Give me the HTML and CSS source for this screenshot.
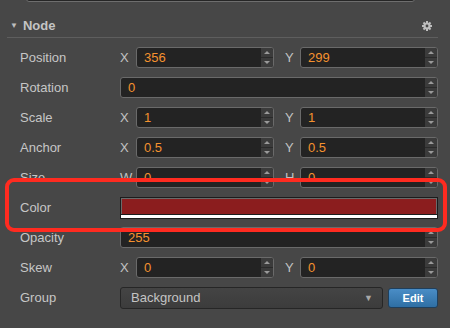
FILE: index.html
```html
<!DOCTYPE html>
<html>
<head>
<meta charset="utf-8">
<link rel="stylesheet" href="styles.css">
</head>
<body>
<div class="panel">
  <div class="stub"></div>
  <div class="header">
    <span class="caret">▼</span>
    <span class="title">Node</span>
    <svg class="gear" width="10" height="10" viewBox="0 0 10 10">
      <g fill="#bdbdbd">
        <rect x="4" y="0" width="2" height="10"/>
        <rect x="0" y="4" width="10" height="2"/>
        <rect x="4" y="0" width="2" height="10" transform="rotate(45 5 5)"/>
        <rect x="4" y="0" width="2" height="10" transform="rotate(-45 5 5)"/>
        <circle cx="5" cy="5" r="3.6"/>
      </g>
      <circle cx="5" cy="5" r="1.4" fill="#474747"/>
    </svg>
  </div>
  <div class="rows">
    <div class="row">
      <div class="label">Position</div>
      <div class="fields">
        <span class="axis">X</span>
        <div class="num"><span class="val">356</span><span class="spin"><i class="up"></i><i class="down"></i></span></div>
        <span class="axis axis-y">Y</span>
        <div class="num"><span class="val">299</span><span class="spin"><i class="up"></i><i class="down"></i></span></div>
      </div>
    </div>
    <div class="row">
      <div class="label">Rotation</div>
      <div class="fields">
        <div class="num"><span class="val">0</span><span class="spin"><i class="up"></i><i class="down"></i></span></div>
      </div>
    </div>
    <div class="row">
      <div class="label">Scale</div>
      <div class="fields">
        <span class="axis">X</span>
        <div class="num"><span class="val">1</span><span class="spin"><i class="up"></i><i class="down"></i></span></div>
        <span class="axis axis-y">Y</span>
        <div class="num"><span class="val">1</span><span class="spin"><i class="up"></i><i class="down"></i></span></div>
      </div>
    </div>
    <div class="row">
      <div class="label">Anchor</div>
      <div class="fields">
        <span class="axis">X</span>
        <div class="num"><span class="val">0.5</span><span class="spin"><i class="up"></i><i class="down"></i></span></div>
        <span class="axis axis-y">Y</span>
        <div class="num"><span class="val">0.5</span><span class="spin"><i class="up"></i><i class="down"></i></span></div>
      </div>
    </div>
    <div class="row">
      <div class="label">Size</div>
      <div class="fields">
        <span class="axis">W</span>
        <div class="num"><span class="val">0</span><span class="spin"><i class="up"></i><i class="down"></i></span></div>
        <span class="axis axis-y">H</span>
        <div class="num"><span class="val">0</span><span class="spin"><i class="up"></i><i class="down"></i></span></div>
      </div>
    </div>
    <div class="row">
      <div class="label">Color</div>
      <div class="fields">
        <div class="color"><div class="swatch"></div><div class="alpha"></div></div>
      </div>
    </div>
    <div class="row">
      <div class="label">Opacity</div>
      <div class="fields">
        <div class="num"><span class="val">255</span><span class="spin"><i class="up"></i><i class="down"></i></span></div>
      </div>
    </div>
    <div class="row">
      <div class="label">Skew</div>
      <div class="fields">
        <span class="axis">X</span>
        <div class="num"><span class="val">0</span><span class="spin"><i class="up"></i><i class="down"></i></span></div>
        <span class="axis axis-y">Y</span>
        <div class="num"><span class="val">0</span><span class="spin"><i class="up"></i><i class="down"></i></span></div>
      </div>
    </div>
    <div class="row">
      <div class="label">Group</div>
      <div class="fields">
        <div class="select"><span>Background</span><span class="arrow">▼</span></div>
        <div class="btn">Edit</div>
      </div>
    </div>
  </div>
  <div class="highlight"></div>
</div>
</body>
</html>
```
FILE: styles.css
```css
html, body {
  margin: 0;
  padding: 0;
  background: #474747;
  font-family: "Liberation Sans", Arial, sans-serif;
  overflow: hidden;
}
.panel {
  position: relative;
  display: flex;
  flex-direction: column;
  width: 450px;
  height: 328px;
  padding: 0 12px 0 7px;
  box-sizing: border-box;
}
.stub {
  flex: none;
  margin: -17px 0 0 19px;
  width: 389px;
  height: 19px;
  box-sizing: border-box;
  border: 1px solid #6e6e6e;
  border-radius: 3px;
  background: #262626;
}
.header {
  flex: none;
  display: flex;
  align-items: center;
  height: 36px;
  box-sizing: border-box;
  padding-top: 11px;
  border-bottom: 1px solid #5e5e5e;
  color: #c4c4c4;
}
.caret {
  font-size: 8px;
  margin: 1px 5px 0 3px;
  color: #bdbdbd;
}
.title {
  font-size: 13px;
  font-weight: bold;
  flex: 1;
}
.gear {
  margin-right: 6px;
  margin-top: 1px;
}
.rows {
  display: flex;
  flex-direction: column;
  gap: 9px;
  padding-top: 9px;
}
.row {
  display: flex;
  align-items: center;
  height: 21px;
}
.label {
  padding-left: 13px;
  box-sizing: border-box;
  width: 113px;
  font-size: 13px;
  color: #c6c6c6;
}
.fields {
  flex: 1;
  display: flex;
  align-items: center;
  height: 21px;
}
.axis {
  width: 16px;
  font-size: 13px;
  color: #c2c2c2;
}
.axis-y {
  margin-left: 11px;
  width: 15px;
}
.num {
  flex: 1;
  display: flex;
  height: 21px;
  box-sizing: border-box;
  border: 1px solid #6a6a6a;
  border-radius: 3px;
  background: #232323;
  overflow: hidden;
}
.val {
  flex: 1;
  padding-left: 7px;
  line-height: 19px;
  font-size: 13px;
  color: #f5922f;
}
.spin {
  width: 12px;
  display: flex;
  flex-direction: column;
  background: #3b3b3b;
}
.spin i {
  flex: 1;
  display: flex;
  align-items: center;
  justify-content: center;
}
.spin .up {
  border-bottom: 1px solid #2a2a2a;
}
.spin .up::after {
  content: "";
  border-left: 3px solid transparent;
  border-right: 3px solid transparent;
  border-bottom: 3px solid #9a9a9a;
}
.spin .down::after {
  content: "";
  border-left: 3px solid transparent;
  border-right: 3px solid transparent;
  border-top: 3px solid #9a9a9a;
}
.color {
  flex: 1;
  height: 22px;
  box-sizing: border-box;
  border: 1px solid #1c1c1c;
  display: flex;
  flex-direction: column;
  background: #1c1c1c;
}
.swatch {
  flex: 1;
  background: #8b1d1e;
  border: 1px solid #6a6a6a;
  border-bottom: none;
}
.alpha {
  height: 3px;
  margin-top: 1px;
  background: #ffffff;
}
.select {
  flex: 1;
  height: 22px;
  box-sizing: border-box;
  border: 1px solid #262626;
  border-radius: 3px;
  background: linear-gradient(#444444, #3c3c3c);
  display: flex;
  align-items: center;
  justify-content: space-between;
  padding: 0 9px 0 10px;
  font-size: 13px;
  color: #c4c4c4;
}
.arrow {
  font-size: 9px;
  color: #a8a8a8;
}
.btn {
  margin-left: 5px;
  width: 50px;
  height: 20px;
  box-sizing: border-box;
  border: 1px solid #1f3f5c;
  border-radius: 3px;
  background: linear-gradient(#4a8dc6, #2f6fa4);
  color: #ffffff;
  font-size: 11px;
  font-weight: bold;
  display: flex;
  align-items: center;
  justify-content: center;
}
.highlight {
  position: absolute;
  left: 5px;
  top: 178px;
  width: 442px;
  height: 54px;
  box-sizing: border-box;
  border: 4px solid #ff2b20;
  border-radius: 9px;
}
```
